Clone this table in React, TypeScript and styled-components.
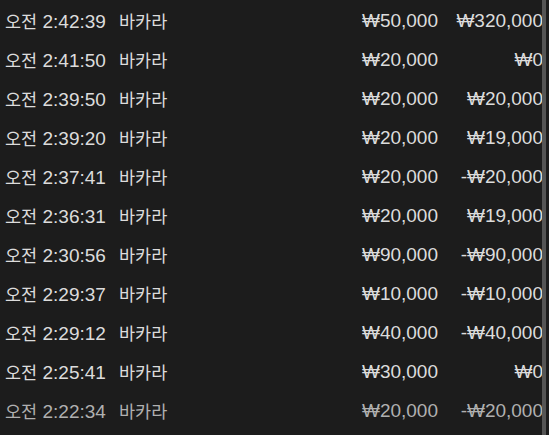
import React from "react";
import styled, { createGlobalStyle } from "styled-components";

interface HistoryItem {
  time: string;
  game: string;
  bet: string;
  result: string;
}

const items: HistoryItem[] = [
  { time: "2:42:39", game: "바카라", bet: "₩50,000", result: "₩320,000" },
  { time: "2:41:50", game: "바카라", bet: "₩20,000", result: "₩0" },
  { time: "2:39:50", game: "바카라", bet: "₩20,000", result: "₩20,000" },
  { time: "2:39:20", game: "바카라", bet: "₩20,000", result: "₩19,000" },
  { time: "2:37:41", game: "바카라", bet: "₩20,000", result: "-₩20,000" },
  { time: "2:36:31", game: "바카라", bet: "₩20,000", result: "₩19,000" },
  { time: "2:30:56", game: "바카라", bet: "₩90,000", result: "-₩90,000" },
  { time: "2:29:37", game: "바카라", bet: "₩10,000", result: "-₩10,000" },
  { time: "2:29:12", game: "바카라", bet: "₩40,000", result: "-₩40,000" },
  { time: "2:25:41", game: "바카라", bet: "₩30,000", result: "₩0" },
  { time: "2:22:34", game: "바카라", bet: "₩20,000", result: "-₩20,000" },
];

const GlobalStyle = createGlobalStyle`
  html, body {
    margin: 0;
    padding: 0;
    background: #1c1c1c;
  }
  body {
    font-family: "Liberation Sans", "Noto Sans CJK KR", sans-serif;
    overflow: hidden;
  }
`;

function App() {
  return (
    <>
      <GlobalStyle />
      <Screen>
        <HistoryList>
          {items.map((item, i) => (
            <HistoryRow key={i} faded={i === items.length - 1}>
              <TimeCell>
                <Hangul>오전</Hangul> {item.time}
              </TimeCell>
              <Hangul>{item.game}</Hangul>
              <AmountCell>{item.bet}</AmountCell>
              <AmountCell>{item.result}</AmountCell>
            </HistoryRow>
          ))}
        </HistoryList>
        <ScrollTrack>
          <ScrollThumb />
        </ScrollTrack>
      </Screen>
    </>
  );
}

const Screen = styled.div`
  display: flex;
  width: 549px;
  height: 435px;
  overflow: hidden;
  background: #1c1c1c;
`;

const HistoryList = styled.div`
  flex: 1;
  min-width: 0;
  overflow: hidden;
  padding-top: 1px;
`;

const HistoryRow = styled.div<{ faded: boolean }>`
  display: grid;
  grid-template-columns: 114px 1fr 116px 105px;
  align-items: center;
  height: 39px;
  padding-left: 5px;
  margin-right: -1px;
  font-size: 19px;
  color: ${({ faded }) => (faded ? "#b0b0b0" : "#dcdcdc")};
  white-space: nowrap;
`;

const TimeCell = styled.span``;

const Hangul = styled.span`
  font-family: "Noto Sans CJK KR", sans-serif;
  font-size: 17.5px;
`;

const AmountCell = styled.span`
  text-align: right;
`;

const ScrollTrack = styled.div`
  width: 7px;
  flex-shrink: 0;
  background: #1c1c1c;
`;

const ScrollThumb = styled.div`
  width: 4px;
  height: 100%;
  background: #555555;
`;

export default App;
